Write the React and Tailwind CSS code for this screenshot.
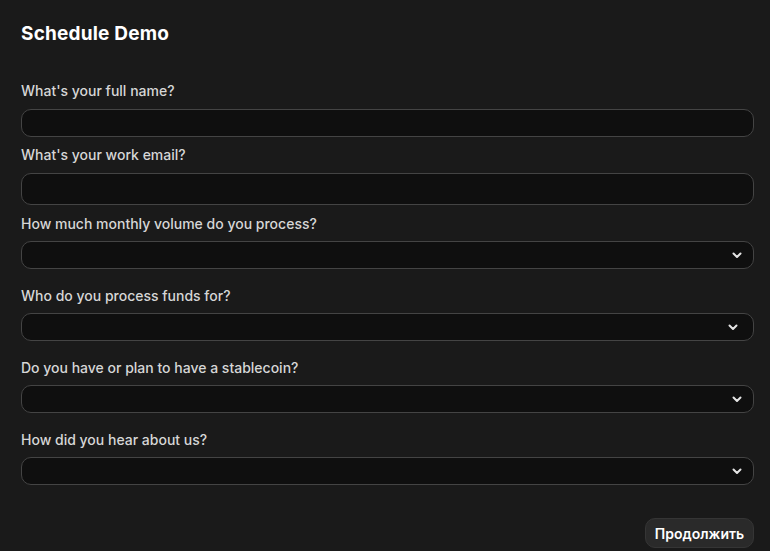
import React from "react";

function Chevron({ right = "right-[10px]" }) {
  return (
    <svg width="12" height="12" viewBox="0 0 12 12" fill="none" className={"absolute top-1/2 -translate-y-1/2 " + right}>
      <path d="M2.5 4.5 L6 8 L9.5 4.5" stroke="#e5e5e5" strokeWidth="2" strokeLinecap="round" strokeLinejoin="round" />
    </svg>
  );
}

function Label({ children, className = "" }) {
  return (
    <div className={"text-[14px] leading-[20px] font-medium text-[#d6d6d6] " + className}>{children}</div>
  );
}

function Select({ right }) {
  return (
    <div className="relative h-[28px] rounded-[10px] border border-[#444444] bg-[#0f0f0f]">
      <Chevron right={right} />
    </div>
  );
}

export default function App() {
  return (
    <div
      className="min-h-[551px] w-full bg-[#1a1a1a] pl-[21px] pr-[16px] pt-[20px]"
      style={{ fontFamily: "Inter, 'Noto Sans', sans-serif" }}
    >
      <h1 className="text-[19px] leading-[28px] font-bold text-white tracking-[0.2px]">Schedule Demo</h1>

      <Label className="mt-[33px]">What's your full name?</Label>
      <div className="mt-[8px] h-[28px] rounded-[10px] border border-[#444444] bg-[#0f0f0f]" />

      <Label className="mt-[8px]">What's your work email?</Label>
      <div className="mt-[8px] h-[32px] rounded-[10px] border border-[#444444] bg-[#0f0f0f]" />

      <Label className="mt-[9px]">How much monthly volume do you process?</Label>
      <div className="mt-[7px]"><Select /></div>

      <Label className="mt-[17px]">Who do you process funds for?</Label>
      <div className="mt-[7px]"><Select right="right-[14px]" /></div>

      <Label className="mt-[17px]">Do you have or plan to have a stablecoin?</Label>
      <div className="mt-[7px]"><Select /></div>

      <Label className="mt-[17px]">How did you hear about us?</Label>
      <div className="mt-[7px]"><Select /></div>

      <div className="mt-[33px] flex justify-end">
        <button className="h-[30px] w-[109px] rounded-[10px] border border-[#353535] bg-[#2a2a2a] text-[14px] font-semibold text-white">
          Продолжить
        </button>
      </div>
    </div>
  );
}
